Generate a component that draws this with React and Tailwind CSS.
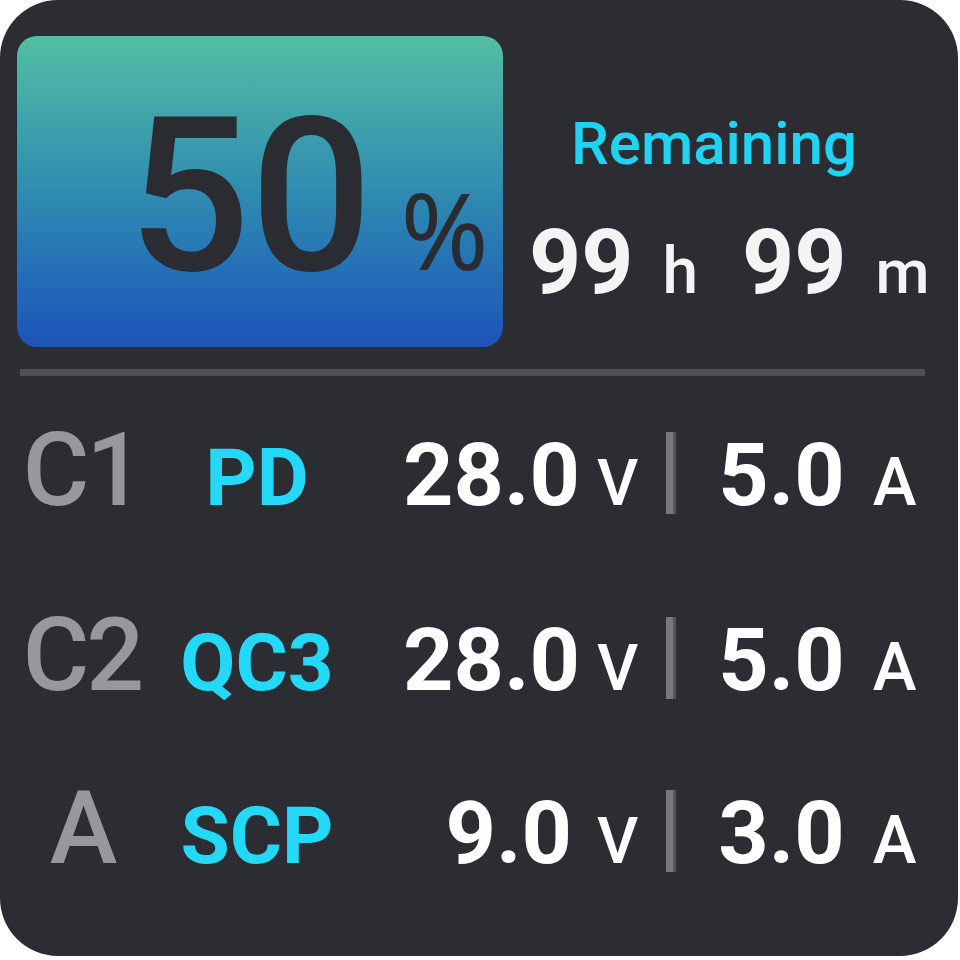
import React from 'react';

const rows = [
  { port: 'C1', proto: 'PD', volts: '28.0', amps: '5.0', gap: 'mt-[43px]', pad: 'pr-0' },
  { port: 'C2', proto: 'QC3', volts: '28.0', amps: '5.0', gap: 'mt-[83px]', pad: 'pr-0' },
  { port: 'A', proto: 'SCP', volts: '9.0', amps: '3.0', gap: 'mt-[71px]', pad: 'pr-[8px]' },
];

const OutputRow = ({ row }) => (
  <div className={`flex items-baseline leading-none ${row.gap}`}>
    <div className="ml-[22px] w-[120px] text-center text-[102px] font-medium tracking-[-3px] text-[#98989b]">{row.port}</div>
    <div className="w-[230px] text-center text-[80px] font-bold text-[#23d9f7]">{row.proto}</div>
    <div className={`w-[208px] text-right text-[88px] font-bold text-white ${row.pad}`}>{row.volts}</div>
    <div className="ml-[17px] text-[64px] font-medium text-white">V</div>
    <div className="ml-[28px] h-[82px] w-[10px] translate-y-[9px] border-r-[3px] border-[#56565a] bg-[#78787a]" />
    <div className="ml-[42px] text-[88px] font-bold text-white">{row.amps}</div>
    <div className="ml-[28px] text-[66px] font-medium text-white">A</div>
  </div>
);

export default function App() {
  return (
    <div className="min-h-[960px] bg-white" style={{ fontFamily: 'Roboto, "Noto Sans", sans-serif' }}>
      <div className="h-[956px] w-[958px] overflow-hidden rounded-[58px] bg-[#2c2d32]">
        <div className="flex items-start">
          <div className="ml-[17px] mt-[36px] h-[311px] w-[486px] rounded-[20px] bg-gradient-to-b from-[#53bfa1] to-[#2052b8]">
            <div className="flex items-baseline pl-[111px] pt-[53px] leading-none text-[#2b2c31]">
              <span className="text-[215px] font-medium">50</span>
              <span className="ml-[28px] font-['Noto_Sans'] text-[106px] font-normal">%</span>
            </div>
          </div>
          <div className="ml-[26px] mt-[114px] flex flex-col leading-none">
            <div className="pl-[42px] text-[60px] font-medium text-[#1fd4f2]">Remaining</div>
            <div className="mt-[43px] flex items-baseline text-[#f4f4f4]">
              <span className="text-[91px] font-bold">99</span>
              <span className="ml-[29px] text-[64px] font-medium">h</span>
              <span className="ml-[44px] text-[91px] font-bold">99</span>
              <span className="ml-[29px] text-[62px] font-medium">m</span>
            </div>
          </div>
        </div>
        <div className="ml-[20px] mt-[22px] h-[7px] w-[905px] bg-[#505052]" />
        {rows.map((row) => (
          <OutputRow key={row.port} row={row} />
        ))}
      </div>
    </div>
  );
}
